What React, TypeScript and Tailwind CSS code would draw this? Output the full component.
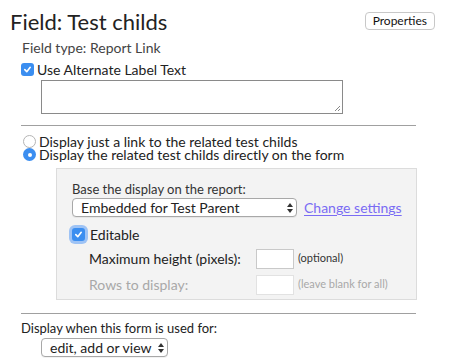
function Check({ glow }: { glow?: boolean }) {
  return (
    <span
      className={`inline-flex w-[13px] h-[13px] rounded-[3px] bg-[#3b8ef0] items-center justify-center shrink-0 ${
        glow ? "ring-[3px] ring-[#9ec3f5]" : ""
      }`}
    >
      <svg width="9" height="9" viewBox="0 0 10 10">
        <path d="M2 5.2 L4.2 7.4 L8 2.6" fill="none" stroke="white" strokeWidth="1.8" strokeLinecap="round" strokeLinejoin="round" />
      </svg>
    </span>
  );
}

function Radio({ on }: { on?: boolean }) {
  return on ? (
    <span className="inline-flex w-[13px] h-[13px] rounded-full bg-[#3b8ef0] items-center justify-center shrink-0">
      <span className="w-[4px] h-[4px] rounded-full bg-white" />
    </span>
  ) : (
    <span className="inline-block w-[13px] h-[13px] rounded-full border border-[#b5b5b5] bg-white shrink-0" />
  );
}

function SelectBox({ label, width }: { label: string; width: string }) {
  return (
    <div
      className={`${width} h-[19px] border border-[#a8a8a8] rounded-[4px] bg-white flex items-center justify-between pl-[8px] pr-[2px] shadow-[0_1px_0_rgba(0,0,0,0.05)]`}
    >
      <span className="text-[14px] leading-none text-[#222]">{label}</span>
      <svg width="8" height="12" viewBox="0 0 8 12">
        <path d="M4 1 L7 5 H1 Z" fill="#333" />
        <path d="M4 11 L7 7 H1 Z" fill="#333" />
      </svg>
    </div>
  );
}

export default function App() {
  return (
    <div className="w-[474px] h-[364px] bg-white font-['Lato',sans-serif] text-[#222] overflow-hidden">
      <div className="flex items-start justify-between pl-[10px] pr-[39px] pt-[7px]">
        <h1 className="text-[22px] leading-[29px] text-[#222]">Field: Test childs</h1>
        <button className="mt-[5px] h-[18px] px-[7px] border border-[#c8c8c8] rounded-[4px] bg-white text-[12px] leading-none text-[#111]">
          Properties
        </button>
      </div>

      <div className="pl-[22px] mt-[3px] text-[14px] leading-[17px] text-[#444]">Field type: Report Link</div>

      <div className="pl-[21px] mt-[6px] flex items-center gap-[3px] text-[14px] leading-[15px]">
        <Check />
        <span>Use Alternate Label Text</span>
      </div>
      <div className="pl-[41px] mt-[3px]">
        <div className="relative w-[302px] h-[34px] border border-[#8a8a8a] bg-white">
          <svg className="absolute right-[1px] bottom-[1px]" width="7" height="7" viewBox="0 0 7 7">
            <path d="M6 1 L1 6 M6 4 L4 6" stroke="#888" strokeWidth="1" />
          </svg>
        </div>
      </div>

      <div className="ml-[21px] w-[395px] h-px bg-[#a0a0a0] mt-[11px]" />

      <div className="pl-[23px] mt-[9px] text-[14px] leading-[13px] flex flex-col">
        <div className="flex items-center gap-[3px]">
          <Radio />
          <span>Display just a link to the related test childs</span>
        </div>
        <div className="flex items-center gap-[3px]">
          <Radio on />
          <span>Display the related test childs directly on the form</span>
        </div>
      </div>

      <div className="ml-[56px] w-[361px] h-[132px] mt-[7px] bg-[#f3f3f3] border border-[#dcdcdc] pl-[15px] pt-[13px]">
        <div className="text-[13px] leading-[14px] text-[#333]">Base the display on the report:</div>
        <div className="flex items-center gap-[7px] mt-[1px]">
          <SelectBox label="Embedded for Test Parent" width="w-[225px]" />
          <a className="text-[14px] text-[#7a6cf4] underline underline-offset-2">Change settings</a>
        </div>
        <div className="flex items-center gap-[5px] mt-[9px] text-[14px] leading-[15px]">
          <Check glow />
          <span>Editable</span>
        </div>
        <div className="pl-[17px] mt-[6px] flex flex-col gap-[5px]">
          <div className="flex items-center">
            <span className="w-[167px] text-[14px] text-[#222]">Maximum height (pixels):</span>
            <div className="w-[38px] h-[20px] border border-[#c9c9c9] bg-white" />
            <span className="ml-[4px] text-[11px] text-[#333]">(optional)</span>
          </div>
          <div className="flex items-center">
            <span className="w-[167px] text-[14px] text-[#a8a8a8]">Rows to display:</span>
            <div className="w-[38px] h-[20px] border border-[#e2e2e2] bg-white" />
            <span className="ml-[4px] text-[11px] text-[#a8a8a8]">(leave blank for all)</span>
          </div>
        </div>
      </div>

      <div className="ml-[21px] w-[395px] h-px bg-[#a0a0a0] mt-[13px]" />

      <div className="pl-[21px] mt-[7px] text-[13px] leading-[14px] text-[#222]">Display when this form is used for:</div>
      <div className="pl-[41px] mt-[3px]">
        <SelectBox label="edit, add or view" width="w-[127px]" />
      </div>
    </div>
  );
}
